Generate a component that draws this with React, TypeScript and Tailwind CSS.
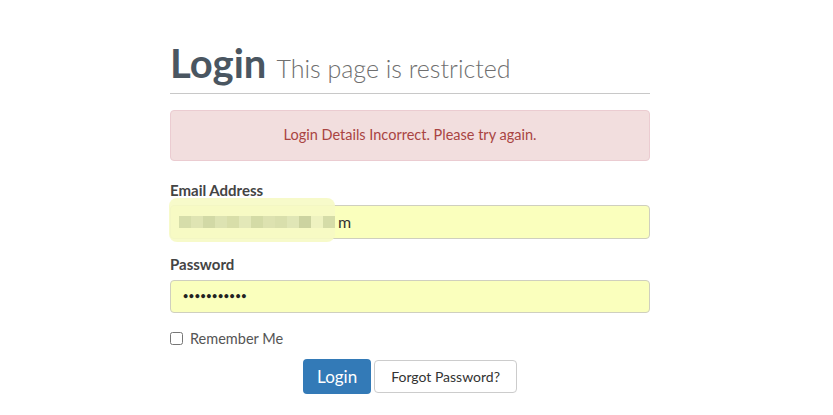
import { useState } from "react";

const FONT = { fontFamily: "Lato, 'Open Sans', sans-serif" };

export default function App() {
    const [remember, setRemember] = useState(false);
    return (
        <div className="min-h-screen bg-white pt-[43px]" style={FONT}>
            <div className="ml-[170px] w-[480px]">
                {/* Heading */}
                <div className="flex items-baseline gap-[10px] border-b border-[#c8c8c8] pb-[5px]">
                    <h1 className="text-[40px] font-bold leading-[40px] text-[#4a5661]">Login</h1>
                    <span className="text-[25px] font-light text-[#6f6f6f]">This page is restricted</span>
                </div>

                {/* Alert */}
                <div className="mt-[16px] flex h-[51px] items-center justify-center rounded-[4px] border border-[#ebccd1] bg-[#f2dede] text-[14.5px] text-[#a94442]">
                    Login Details Incorrect. Please try again.
                </div>

                {/* Email */}
                <div className="mt-[20px]">
                    <label className="block text-[15px] font-bold leading-[18px] text-[#444]">Email Address</label>
                    <div className="relative mt-[6px] flex h-[34px] items-center rounded-[4px] border border-[#cfcfbf] bg-[#faffbd] px-[8px] text-[16px] text-[#333]">
                        <div className="absolute left-[-2px] top-[-8px] h-[44px] w-[166px] rounded-[8px] bg-[#f6f9c4] opacity-90" />
                        <div className="relative flex">
                            <span className="h-[12px] w-[12px] bg-[#d6ddaa]" />
                            <span className="h-[12px] w-[12px] bg-[#dfe4b3]" />
                            <span className="h-[12px] w-[12px] bg-[#d2d9a6]" />
                            <span className="h-[12px] w-[12px] bg-[#dde3b2]" />
                            <span className="h-[12px] w-[12px] bg-[#d8dea9]" />
                            <span className="h-[12px] w-[12px] bg-[#e3e8b8]" />
                            <span className="h-[12px] w-[12px] bg-[#d4dba6]" />
                            <span className="h-[12px] w-[12px] bg-[#dde2b0]" />
                            <span className="h-[12px] w-[12px] bg-[#d9dfac]" />
                            <span className="h-[12px] w-[12px] bg-[#e0e6b6]" />
                            <span className="h-[12px] w-[12px] bg-[#ccd3a0]" />
                            <span className="h-[12px] w-[12px] bg-[#eef2c0]" />
                            <span className="h-[12px] w-[12px] bg-[#d5dca8]" />
                        </div>
                        <span className="relative ml-[3px]">m</span>
                    </div>
                </div>

                {/* Password */}
                <div className="mt-[16px]">
                    <label className="block text-[15px] font-bold leading-[18px] text-[#444]">Password</label>
                    <div className="mt-[7px] flex h-[33px] items-center rounded-[4px] border border-[#cfcfbf] bg-[#faffbd] px-[12px] text-[9px] font-bold tracking-[0.6px] text-[#222]">
                        •••••••••••
                    </div>
                </div>

                {/* Remember */}
                <label className="mt-[15px] flex items-center gap-[7px] text-[14.5px] text-[#555]">
                    <input
                        type="checkbox"
                        checked={remember}
                        onChange={() => setRemember(!remember)}
                        className="h-[13px] w-[13px]"
                    />
                    Remember Me
                </label>

                {/* Buttons */}
                <div className="mt-[10px] flex justify-center gap-[3px]">
                    <button className="h-[35px] rounded-[4px] bg-[#337ab7] px-[14px] text-[17px] text-white">
                        Login
                    </button>
                    <button className="mt-[1px] h-[33px] rounded-[4px] border border-[#ccc] bg-white px-[16px] text-[14px] text-[#333]">
                        Forgot Password?
                    </button>
                </div>
            </div>
        </div>
    );
}
